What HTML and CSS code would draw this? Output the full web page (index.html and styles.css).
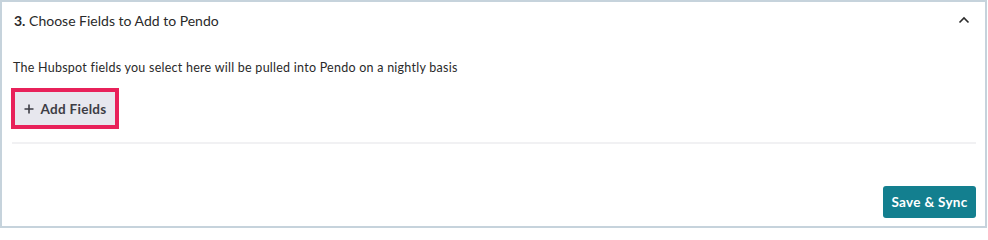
FILE: index.html
```html
<!DOCTYPE html>
<html>
<head>
<meta charset="utf-8">
<link rel="stylesheet" href="styles.css">
</head>
<body>
<section class="panel">
  <header class="panel-header">
    <h3 class="panel-title"><strong>3.</strong> Choose Fields to Add to Pendo</h3>
    <svg class="chevron" width="12" height="8" viewBox="0 0 12 8"><path d="M1.5 6.5 L6 2 L10.5 6.5" fill="none" stroke="#2b2b2b" stroke-width="1.6"/></svg>
  </header>
  <div class="panel-body">
    <p class="desc">The Hubspot fields you select here will be pulled into Pendo on a nightly basis</p>
    <div class="highlight">
      <button class="add-btn"><svg class="plus" width="10" height="10" viewBox="0 0 10 10"><path d="M5 0.5 V9.5 M0.5 5 H9.5" stroke="#3d3d45" stroke-width="1.6" fill="none"/></svg>Add Fields</button>
    </div>
    <div class="divider"></div>
  </div>
  <footer class="panel-footer">
    <button class="save-btn">Save &amp; Sync</button>
  </footer>
</section>
</body>
</html>
```
FILE: styles.css
```css
html, body { margin: 0; padding: 0; background: #fff; }
body { font-family: Lato, "Open Sans", sans-serif; color: #2a2a2a; }
.panel {
  box-sizing: border-box;
  width: 987px;
  height: 228px;
  border: 2px solid #c6d3dc;
  display: flex;
  flex-direction: column;
}
.panel-header {
  height: 36px;
  display: flex;
  align-items: center;
  justify-content: space-between;
  padding: 0 12px 0 12px;
}
.panel-title {
  margin: 0;
  font-size: 14px;
  font-weight: 400;
  color: #2a2a2a;
}
.panel-title strong { font-weight: 700; }
.chevron { margin-right: 3px; }
.panel-body { padding: 0 9px 0 10px; }
.desc {
  margin: 22px 0 0 1px;
  font-size: 12.5px;
  line-height: 16px;
  letter-spacing: 0.25px;
  color: #2a2a2a;
}
.highlight {
  display: flex;
  width: fit-content;
  margin-top: 12px;
  margin-left: -1px;
  border: 4px solid #e8215a;
}
.add-btn {
  display: flex;
  align-items: center;
  justify-content: center;
  gap: 6px;
  width: 100px;
  height: 33px;
  border: 0;
  background: #e7e7ee;
  font-family: inherit;
  font-size: 13.5px;
  font-weight: 700;
  letter-spacing: 0.3px;
  color: #3d3d45;
  padding: 0 0 0 1px;
}
.plus { flex: none; }
.divider {
  height: 2px;
  background: #f1f1f3;
  margin-top: 13px;
}
.panel-footer {
  flex: 1;
  display: flex;
  justify-content: flex-end;
  align-items: flex-end;
  padding: 0 9px 8px 0;
}
.save-btn {
  width: 93px;
  height: 32px;
  border: 0;
  border-radius: 3px;
  background: #137f8f;
  color: #fff;
  font-family: inherit;
  font-size: 13.5px;
  font-weight: 700;
  letter-spacing: 0.3px;
}
```
